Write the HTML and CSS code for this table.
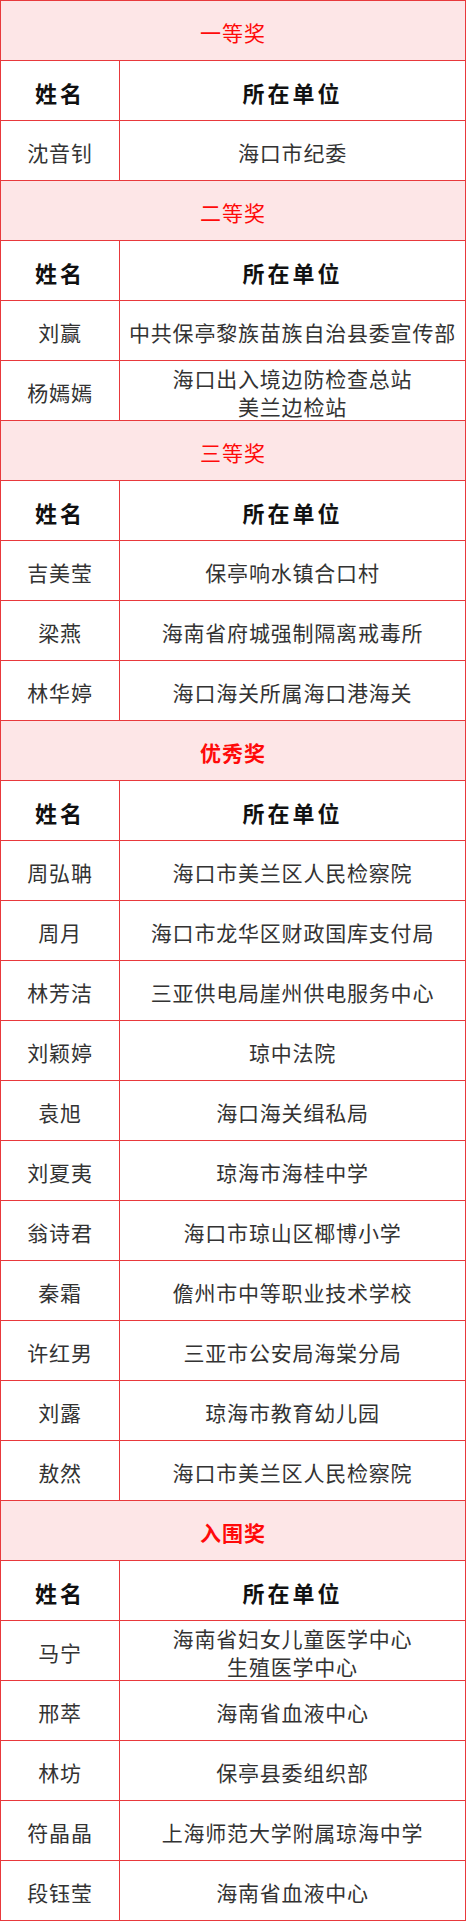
FILE: index.html
```html
<!DOCTYPE html>
<html lang="zh-CN">
<head>
<meta charset="utf-8">
<title>获奖名单</title>
<link rel="stylesheet" href="styles.css">
</head>
<body>
<div class="sheet">
  <div class="title">一等奖</div>
  <div class="row head"><div class="c1">姓名</div><div class="c2">所在单位</div></div>
  <div class="row"><div class="c1">沈音钊</div><div class="c2">海口市纪委</div></div>

  <div class="title">二等奖</div>
  <div class="row head"><div class="c1">姓名</div><div class="c2">所在单位</div></div>
  <div class="row"><div class="c1">刘赢</div><div class="c2">中共保亭黎族苗族自治县委宣传部</div></div>
  <div class="row"><div class="c1">杨嫣嫣</div><div class="c2">海口出入境边防检查总站<br>美兰边检站</div></div>

  <div class="title">三等奖</div>
  <div class="row head"><div class="c1">姓名</div><div class="c2">所在单位</div></div>
  <div class="row"><div class="c1">吉美莹</div><div class="c2">保亭响水镇合口村</div></div>
  <div class="row"><div class="c1">梁燕</div><div class="c2">海南省府城强制隔离戒毒所</div></div>
  <div class="row"><div class="c1">林华婷</div><div class="c2">海口海关所属海口港海关</div></div>

  <div class="title bold">优秀奖</div>
  <div class="row head"><div class="c1">姓名</div><div class="c2">所在单位</div></div>
  <div class="row"><div class="c1">周弘聃</div><div class="c2">海口市美兰区人民检察院</div></div>
  <div class="row"><div class="c1">周月</div><div class="c2">海口市龙华区财政国库支付局</div></div>
  <div class="row"><div class="c1">林芳洁</div><div class="c2">三亚供电局崖州供电服务中心</div></div>
  <div class="row"><div class="c1">刘颖婷</div><div class="c2">琼中法院</div></div>
  <div class="row"><div class="c1">袁旭</div><div class="c2">海口海关缉私局</div></div>
  <div class="row"><div class="c1">刘夏夷</div><div class="c2">琼海市海桂中学</div></div>
  <div class="row"><div class="c1">翁诗君</div><div class="c2">海口市琼山区椰博小学</div></div>
  <div class="row"><div class="c1">秦霜</div><div class="c2">儋州市中等职业技术学校</div></div>
  <div class="row"><div class="c1">许红男</div><div class="c2">三亚市公安局海棠分局</div></div>
  <div class="row"><div class="c1">刘露</div><div class="c2">琼海市教育幼儿园</div></div>
  <div class="row"><div class="c1">敖然</div><div class="c2">海口市美兰区人民检察院</div></div>

  <div class="title bold">入围奖</div>
  <div class="row head"><div class="c1">姓名</div><div class="c2">所在单位</div></div>
  <div class="row"><div class="c1">马宁</div><div class="c2">海南省妇女儿童医学中心<br>生殖医学中心</div></div>
  <div class="row"><div class="c1">邢萃</div><div class="c2">海南省血液中心</div></div>
  <div class="row"><div class="c1">林坊</div><div class="c2">保亭县委组织部</div></div>
  <div class="row"><div class="c1">符晶晶</div><div class="c2">上海师范大学附属琼海中学</div></div>
  <div class="row"><div class="c1">段钰莹</div><div class="c2">海南省血液中心</div></div>
</div>
</body>
</html>
```

FILE: styles.css
```css
html, body {
  margin: 0;
  padding: 0;
  background: #ffffff;
}

.sheet {
  width: 466px;
  box-sizing: border-box;
  border: 1px solid #e8393c;
  border-bottom: none;
  font-family: "Noto Sans CJK SC", "Noto Sans", sans-serif;
  color: #333333;
}

.title {
  height: 59px;
  border-bottom: 1px solid #e8393c;
  background: #fde6e7;
  color: #ff0a0a;
  font-size: 21px;
  letter-spacing: 1px;
  display: flex;
  align-items: center;
  justify-content: center;
  padding-top: 2px;
  box-sizing: content-box;
  height: 57px;
}

.title.bold {
  font-weight: 700;
}

.row {
  display: grid;
  grid-template-columns: 119px 1fr;
  height: 59px;
  border-bottom: 1px solid #e8393c;
}

.c1, .c2 {
  display: flex;
  align-items: center;
  justify-content: center;
  text-align: center;
  font-size: 21px;
  line-height: 28px;
  letter-spacing: 0.8px;
  padding-top: 3px;
}

.c1 {
  border-right: 1px solid #e8393c;
}

.head .c1, .head .c2 {
  font-weight: 700;
  color: #111111;
  font-size: 22px;
  letter-spacing: 3px;
}
```
